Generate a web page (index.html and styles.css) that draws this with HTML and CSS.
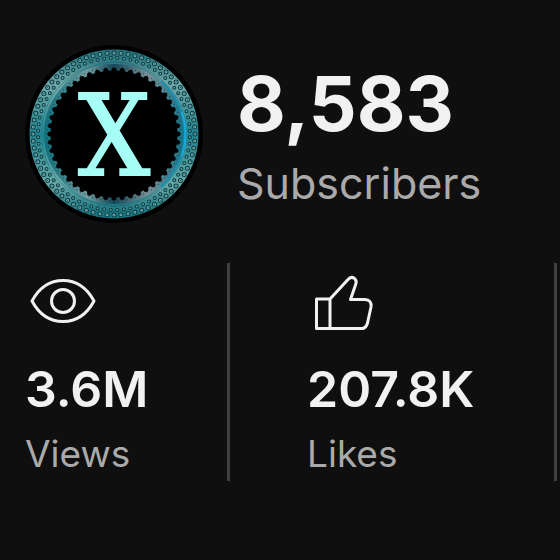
FILE: index.html
```html
<!DOCTYPE html>
<html lang="en">
  <head>
    <meta charset="utf-8">
    <title>Channel stats</title>
    <meta name="viewport" content="width=device-width,initial-scale=1">
    <link rel="stylesheet" href="styles.css">
  </head>

  <body>
    <main>
      <header class="channel">
        <svg class="avatar" viewBox="0 0 178 178" role="img" aria-label="Channel avatar">
          <defs>
            <linearGradient id="ring" x1="0" y1="0" x2="0" y2="1">
              <stop offset="0" stop-color="#28757f"/>
              <stop offset=".18" stop-color="#73aaaa"/>
              <stop offset=".5" stop-color="#218591"/>
              <stop offset=".82" stop-color="#69a9a7"/>
              <stop offset="1" stop-color="#197680"/>
            </linearGradient>
            <linearGradient id="rim" x1="0" y1="0" x2="1" y2="0">
              <stop offset="0" stop-color="#12717c"/>
              <stop offset=".3" stop-color="#719a9e"/>
              <stop offset=".5" stop-color="#15485a"/>
              <stop offset=".75" stop-color="#788f98"/>
              <stop offset="1" stop-color="#187486"/>
            </linearGradient>
          </defs>
          <circle cx="89" cy="89" r="89" fill="#000"/>
          <circle cx="89" cy="89" r="78" fill="none" stroke="url(#ring)" stroke-width="13"/>
          <circle cx="89" cy="89" r="68" fill="none" stroke="url(#rim)" stroke-width="9"/>
          <!-- beads on the outer band -->
          <g class="beads">
            <circle cx="89" cy="89" r="81" stroke="#0d3a40" stroke-width="5" pathLength="360" stroke-dasharray="0 5"/>
            <circle cx="89" cy="89" r="81" stroke="#6fb0b0" stroke-width="3" pathLength="360" stroke-dasharray="0 5"/>
            <circle cx="89" cy="89" r="81" stroke="#0d3a40" stroke-width="1" pathLength="360" stroke-dasharray="0 5"/>
            <circle cx="89" cy="89" r="76" stroke="#0d3a40" stroke-width="4" pathLength="360" stroke-dasharray="0 5" stroke-dashoffset="2.5"/>
            <circle cx="89" cy="89" r="76" stroke="#5ba1a3" stroke-width="2" pathLength="360" stroke-dasharray="0 5" stroke-dashoffset="2.5"/>
          </g>
          <circle cx="89" cy="89" r="71" fill="none" stroke="url(#ring)" stroke-width="2"/>
          <path d="M136 36a71 71 0 0 1 0 106" fill="none" stroke="#168fae" stroke-width="2"/>
          <path d="M157 67a71 71 0 0 1 0 44" fill="none" stroke="#19a9dc" stroke-width="2"/>
          <!-- lace on the inner edge -->
          <g class="beads">
            <circle cx="89" cy="89" r="64" stroke="#000" stroke-width="5" pathLength="360" stroke-dasharray="0 7.5"/>
            <circle cx="89" cy="89" r="67" stroke="#12333a" stroke-width="1" pathLength="360" stroke-dasharray="0 3.75"/>
          </g>
          <text class="avatar-letter" x="89" y="130">X</text>
        </svg>
        <div>
          <h1 class="count">8,583</h1>
          <p class="count-label">Subscribers</p>
        </div>
      </header>

      <section class="stats">
        <div class="stat">
          <svg class="icon" viewBox="0 0 76 60" aria-hidden="true">
            <path d="M7 30C14 17 25 9.500 38 9.500S62 17 69 30C62 43 51 50.500 38 50.500S14 43 7 30Z"/>
            <circle cx="38" cy="30" r="11.500"/>
          </svg>
          <p class="value">3.6M</p>
          <p class="label">Views</p>
        </div>
        <div class="stat">
          <svg class="icon" viewBox="0 0 76 60" aria-hidden="true">
            <path d="M9.500 28H23V57.500H9.500ZM23 28L41 8.500C45 4 51 8 48.500 14L43.500 28.500H58Q65 29 64 36L60.500 52Q59 57.500 55 57.500H23"/>
          </svg>
          <p class="value">207.8K</p>
          <p class="label">Likes</p>
        </div>
      </section>
    </main>
  </body>
</html>
```
FILE: styles.css
```css
* {
  box-sizing: border-box;
  margin: 0;
  padding: 0;
}

body {
  min-height: 100vh;
  background-color: #0f0f0f;
  color: #f1f1f1;
  font-family: Inter, "Liberation Sans", sans-serif;
}

.channel {
  display: flex;
  align-items: center;
  gap: 34px;
  padding: 45px 25px 40px;
}

.avatar {
  flex: none;
  width: 178px;
  height: 178px;
}

.avatar-letter {
  font-family: "DejaVu Serif Condensed", "DejaVu Serif", serif;
  font-size: 112px;
  text-anchor: middle;
  fill: #a5fdf5;
  stroke: #a5fdf5;
  stroke-width: 2px;
}

.beads {
  fill: none;
  stroke-linecap: round;
}

.count {
  margin-bottom: 8px;
  font-size: 75px;
  line-height: 90px;
  font-weight: 700;
}

.count-label {
  font-size: 43px;
  line-height: 52px;
  color: #aaa;
}

.stats {
  display: grid;
  grid-template-columns: 230fr 327fr;
  padding-right: 3px;
}

.stat {
  padding: 8px 0 3px 25px;
  border-right: 3px solid #3f3f3f;
}

.stat + .stat {
  padding-left: 77px;
}

.icon {
  display: block;
  width: 76px;
  height: 60px;
  fill: none;
  stroke: #f1f1f1;
  stroke-width: 3px;
  stroke-linejoin: round;
}

.value {
  margin-top: 26px;
  font-size: 50px;
  line-height: 64px;
  font-weight: 600;
}

.label {
  margin-top: 9px;
  font-size: 37px;
  line-height: 48px;
  color: #aaa;
}
```
